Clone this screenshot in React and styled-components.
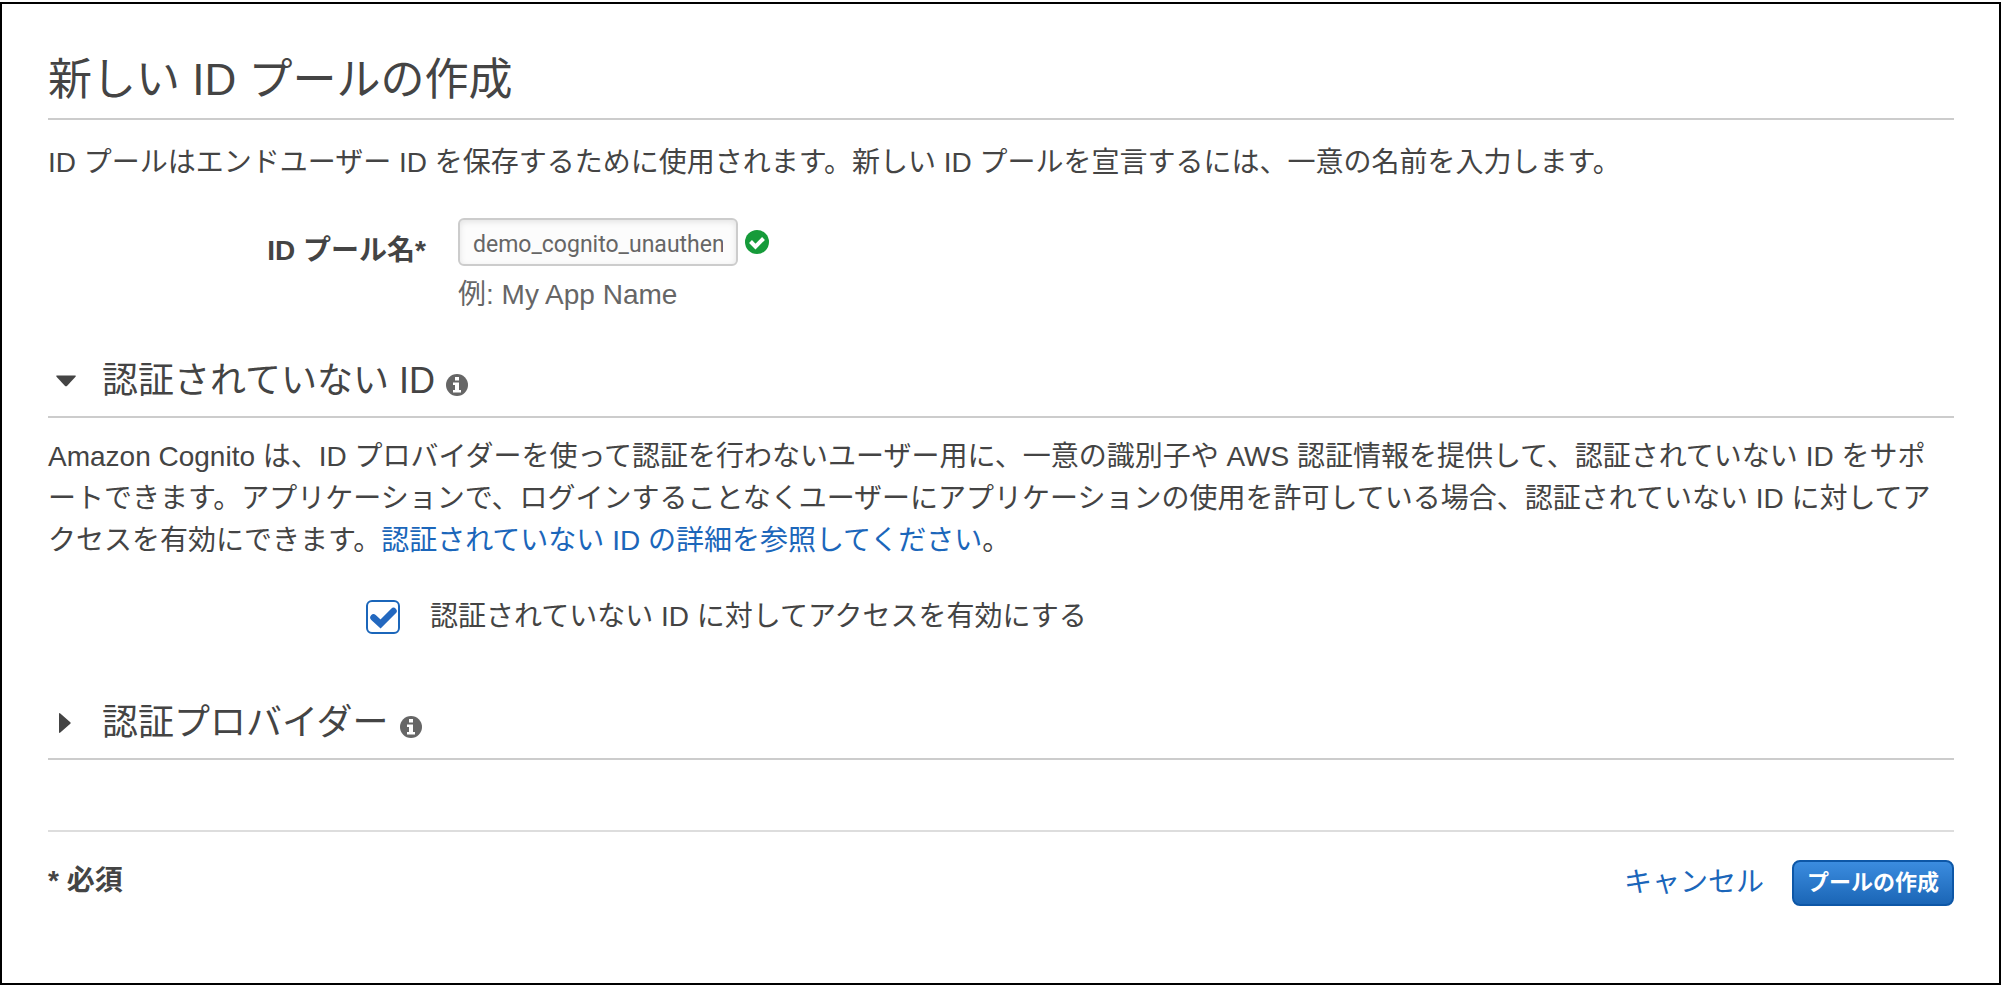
import React, { useState } from "react";
import styled, { createGlobalStyle } from "styled-components";

const GlobalStyle = createGlobalStyle`
  *, *::before, *::after { box-sizing: border-box; }
  body {
    margin: 0;
    background: #fff;
    color: #444;
    font-family: "Liberation Sans", "Noto Sans CJK JP", sans-serif;
    font-size: 28px;
    line-height: 42px;
  }
`;

const Panel = styled.main`
  margin: 2px 1px 1px 0;
  padding: 46px 45px 77px 46px;
  border: 2px solid #000;
`;

const Title = styled.h1`
  margin: 0;
  padding-bottom: 8px;
  border-bottom: 2px solid #ccc;
  font-size: 44px;
  font-weight: 400;
  line-height: 60px;
`;

const Lead = styled.p`
  margin: 22px 0 0;
`;

const Text = styled.p`
  margin: 0;
  padding: 18px 10px 0 0;
  line-break: loose;
`;

const Link = styled.a`
  color: #1b66ba;
  text-decoration: none;
`;

const Field = styled.div`
  display: grid;
  grid-template-columns: 378px 1fr;
  column-gap: 32px;
  margin-top: 34px;
`;

const FieldLabel = styled.label`
  padding-top: 12px;
  text-align: right;
  font-weight: 700;
`;

const InputRow = styled.div`
  display: flex;
  align-items: center;
  gap: 7px;
`;

const TextInput = styled.input`
  width: 280px;
  height: 48px;
  padding: 4px 13px 0;
  border: 2px solid #ccc;
  border-radius: 6px;
  background: #fcfcfc;
  box-shadow: inset 0 2px 6px rgba(0, 0, 0, 0.1);
  color: #666;
  font-family: Roboto, "Noto Sans CJK JP", sans-serif;
  font-size: 23px;
`;

const Hint = styled.p`
  margin: 8px 0 0;
  color: #666;
`;

const Section = styled.section`
  margin-top: ${(p) => p.$gap}px;
`;

const SectionHead = styled.h2`
  display: flex;
  align-items: center;
  margin: 0;
  padding-bottom: 10px;
  border-bottom: 2px solid #ccc;
  font-size: 36px;
  font-weight: 400;
  line-height: 50px;
`;

const Toggle = styled.button`
  display: flex;
  align-items: center;
  gap: 18px;
  padding: 0 11px 0 0;
  border: 0;
  background: none;
  color: inherit;
  font: inherit;
  cursor: pointer;
`;

const InfoSlot = styled.span`
  display: flex;
  padding-top: 8px;
`;

const CheckRow = styled.label`
  display: flex;
  align-items: center;
  gap: 30px;
  margin: 34px 0 0 318px;
`;

const CheckBox = styled.span`
  display: grid;
  width: 34px;
  height: 34px;

  > * { grid-area: 1 / 1; }
  > svg { pointer-events: none; place-self: center; }
  > input:not(:checked) + svg { visibility: hidden; }
`;

const CheckInput = styled.input`
  appearance: none;
  width: 34px;
  height: 34px;
  margin: 0;
  border: 2px solid #1b66ba;
  border-radius: 6px;
  background: #fff;
`;

const Footer = styled.footer`
  display: flex;
  justify-content: space-between;
  align-items: flex-start;
  margin-top: 70px;
  padding-top: 28px;
  border-top: 2px solid #ddd;
`;

const Actions = styled.div`
  display: flex;
  align-items: center;
  gap: 28px;
`;

const PrimaryButton = styled.button`
  height: 46px;
  padding: 0 13px;
  border: 2px solid #0d57a7;
  border-radius: 8px;
  background: linear-gradient(#3b8cdf, #1b66b6);
  color: #fff;
  font-family: "Liberation Sans", "Noto Sans CJK JP", sans-serif;
  font-size: 22px;
  font-weight: 700;
  line-height: 32px;
  cursor: pointer;
`;

function Caret({ open }) {
  return (
    <svg width="36" height="24" viewBox="0 0 36 24" aria-hidden="true">
      <path
        d={
          open
            ? "M9 6.500h18q1.500 0 .5 1.200l-8.300 9q-1.200 1.300-2.400 0l-8.300-9Q7.500 6.500 9 6.500z"
            : "M11 3q0-1.500 1.300-.5l10 8.700q1 .8 0 1.600l-10 8.700q-1.300 1-1.300-.5z"
        }
        fill="#444"
      />
    </svg>
  );
}

function InfoIcon() {
  return (
    <svg width="22" height="22" viewBox="0 0 22 22" role="img" aria-label="情報">
      <circle cx="11" cy="11" r="11" fill="#666" />
      <path d="M9 3h4v3.600H9zM7 8.500h6v7.500h2v2.500H7V16h2v-5H7z" fill="#fff" />
    </svg>
  );
}

function ValidIcon() {
  return (
    <svg width="24" height="24" viewBox="0 0 24 24" role="img" aria-label="有効">
      <circle cx="12" cy="12" r="12" fill="#169b3a" />
      <path d="M5.500 11.500l5 5.200L18.500 8.500" fill="none" stroke="#fff" strokeWidth="4" />
    </svg>
  );
}

function CheckMark() {
  return (
    <svg width="30" height="24" viewBox="0 0 30 24" aria-hidden="true">
      <path
        d="M5.500 12.500l7 6.500L25.500 6"
        fill="none"
        stroke="#2368bf"
        strokeWidth="6.500"
        strokeLinecap="round"
      />
    </svg>
  );
}

function SectionHeading({ title, open, onToggle }) {
  return (
    <SectionHead>
      <Toggle type="button" aria-expanded={open} onClick={onToggle}>
        <Caret open={open} />
        {title}
      </Toggle>
      <InfoSlot>
        <InfoIcon />
      </InfoSlot>
    </SectionHead>
  );
}

export default function App() {
  const [name, setName] = useState("demo_cognito_unauthen");
  const [guestOpen, setGuestOpen] = useState(true);
  const [providersOpen, setProvidersOpen] = useState(false);
  const [guestAccess, setGuestAccess] = useState(true);

  return (
    <>
      <GlobalStyle />
      <Panel lang="ja">
        <Title>新しい ID プールの作成</Title>
        <Lead>
          ID プールはエンドユーザー ID を保存するために使用されます。新しい ID プールを宣言するには、一意の名前を入力します。
        </Lead>

        <Field>
          <FieldLabel htmlFor="pool-name">ID プール名*</FieldLabel>
          <div>
            <InputRow>
              <TextInput id="pool-name" type="text" value={name} onChange={(e) => setName(e.target.value)} />
              <ValidIcon />
            </InputRow>
            <Hint>例: My App Name</Hint>
          </div>
        </Field>

        <Section $gap={40}>
          <SectionHeading title="認証されていない ID" open={guestOpen} onToggle={() => setGuestOpen(!guestOpen)} />
          {guestOpen && (
            <>
              <Text>
                Amazon Cognito は、ID プロバイダーを使って認証を行わないユーザー用に、一意の識別子や AWS 認証情報を提供して、認証されていない ID をサポートできます。アプリケーションで、ログインすることなくユーザーにアプリケーションの使用を許可している場合、認証されていない ID に対してアクセスを有効にできます。
                <Link href="#unauthenticated">認証されていない ID の詳細を参照してください</Link>。
              </Text>
              <CheckRow>
                <CheckBox>
                  <CheckInput type="checkbox" checked={guestAccess} onChange={(e) => setGuestAccess(e.target.checked)} />
                  <CheckMark />
                </CheckBox>
                認証されていない ID に対してアクセスを有効にする
              </CheckRow>
            </>
          )}
        </Section>

        <Section $gap={60}>
          <SectionHeading title="認証プロバイダー" open={providersOpen} onToggle={() => setProvidersOpen(!providersOpen)} />
        </Section>

        <Footer>
          <strong>* 必須</strong>
          <Actions>
            <Link href="#cancel">キャンセル</Link>
            <PrimaryButton type="button">プールの作成</PrimaryButton>
          </Actions>
        </Footer>
      </Panel>
    </>
  );
}
